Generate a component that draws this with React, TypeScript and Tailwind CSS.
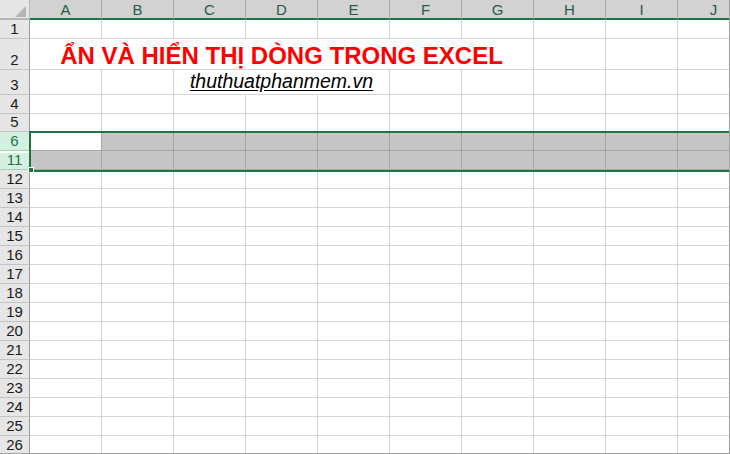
const COLS = ['A', 'B', 'C', 'D', 'E', 'F', 'G', 'H', 'I', 'J']

type Row = {
  label: string
  h: string
  selected?: boolean
}

const ROWS: Row[] = [
  { label: '1', h: 'h-[19px]' },
  { label: '2', h: 'h-[31px]' },
  { label: '3', h: 'h-[25px]' },
  { label: '4', h: 'h-[19px]' },
  { label: '5', h: 'h-[18px]' },
  { label: '6', h: 'h-[19px]', selected: true },
  { label: '11', h: 'h-[19px]', selected: true },
  ...Array.from({ length: 15 }, (_, i) => ({ label: String(12 + i), h: 'h-[19px]' })),
]

function RowHeader({ row }: { row: Row }) {
  const hidden = row.label === '11'
  return (
    <div
      className={`w-[30px] shrink-0 flex items-end justify-center pb-[1px] text-[15px] leading-[16px] border-r border-b ${
        row.selected
          ? 'bg-[#d3f0e0] text-[#217346] border-[#9fd5b7]'
          : 'bg-[#e6e6e6] text-[#1a1a1a] border-[#c4c4c4] border-r-[#9b9b9b]'
      } ${hidden ? 'shadow-[inset_0_2px_0_#ffffff]' : ''}`}
    >
      {row.label}
    </div>
  )
}

function Cell({ sel, white, span = 1, children }: { sel?: boolean; white?: boolean; span?: number; children?: React.ReactNode }) {
  const w = span === 7 ? 'w-[504px]' : span === 3 ? 'w-[216px]' : 'w-[72px]'
  const tone = sel
    ? white
      ? 'bg-white border-[#a6a6a6]'
      : 'bg-[#c6c6c6] border-[#a6a6a6]'
    : 'bg-white border-[#d4d4d4]'
  return (
    <div className={`${w} shrink-0 border-r border-b ${tone} flex justify-center items-end overflow-visible whitespace-nowrap`}>
      {children}
    </div>
  )
}

function SheetRow({ row }: { row: Row }) {
  let cells: React.ReactNode
  if (row.label === '2') {
    cells = (
      <>
        <Cell span={7}>
          <span className="text-[24px] leading-none font-bold text-[#ff0000] pb-[1px]">ẨN VÀ HIỂN THỊ DÒNG TRONG EXCEL</span>
        </Cell>
        <Cell />
        <Cell />
        <Cell />
      </>
    )
  } else if (row.label === '3') {
    cells = (
      <>
        <Cell />
        <Cell />
        <Cell span={3}>
          <span className="text-[19.5px] leading-none italic underline underline-offset-[2px] text-black pb-[3px]">thuthuatphanmem.vn</span>
        </Cell>
        <Cell />
        <Cell />
        <Cell />
        <Cell />
        <Cell />
      </>
    )
  } else {
    cells = COLS.map((c, i) => <Cell key={c} sel={row.selected} white={row.label === '6' && i === 0} />)
  }
  return (
    <div className={`flex ${row.h}`}>
      <RowHeader row={row} />
      {cells}
    </div>
  )
}

export default function App() {
  return (
    <div className="relative w-[730px] h-[454px] overflow-hidden bg-white border-r border-b border-[#a0a0a0] font-['Liberation_Sans',Arial,sans-serif]">
      <div className="flex h-[20px]">
        <div className="w-[30px] shrink-0 bg-[#e6e6e6] border-r border-b-2 border-[#b5b5b5] flex items-end justify-end pr-[3px] pb-[1px]">
          <svg width="11" height="11" viewBox="0 0 11 11">
            <polygon points="11,0 11,11 0,11" fill="#b4b4b4" />
          </svg>
        </div>
        {COLS.map((c) => (
          <div
            key={c}
            className="w-[72px] shrink-0 bg-[#d2d2d2] border-r border-r-[#ababab] border-b-2 border-b-[#217346] flex items-center justify-center text-[15px] leading-none text-[#2a5a44]"
          >
            {c}
          </div>
        ))}
      </div>
      {ROWS.map((r) => (
        <SheetRow key={r.label} row={r} />
      ))}

      {/* selection */}
      <div className="absolute left-[29px] top-[131px] w-[720px] h-[41px] border-2 border-[#217346] pointer-events-none" />
      <div className="absolute left-[28px] top-[167px] w-[6px] h-[6px] bg-[#217346] border border-white pointer-events-none" />
    </div>
  )
}
